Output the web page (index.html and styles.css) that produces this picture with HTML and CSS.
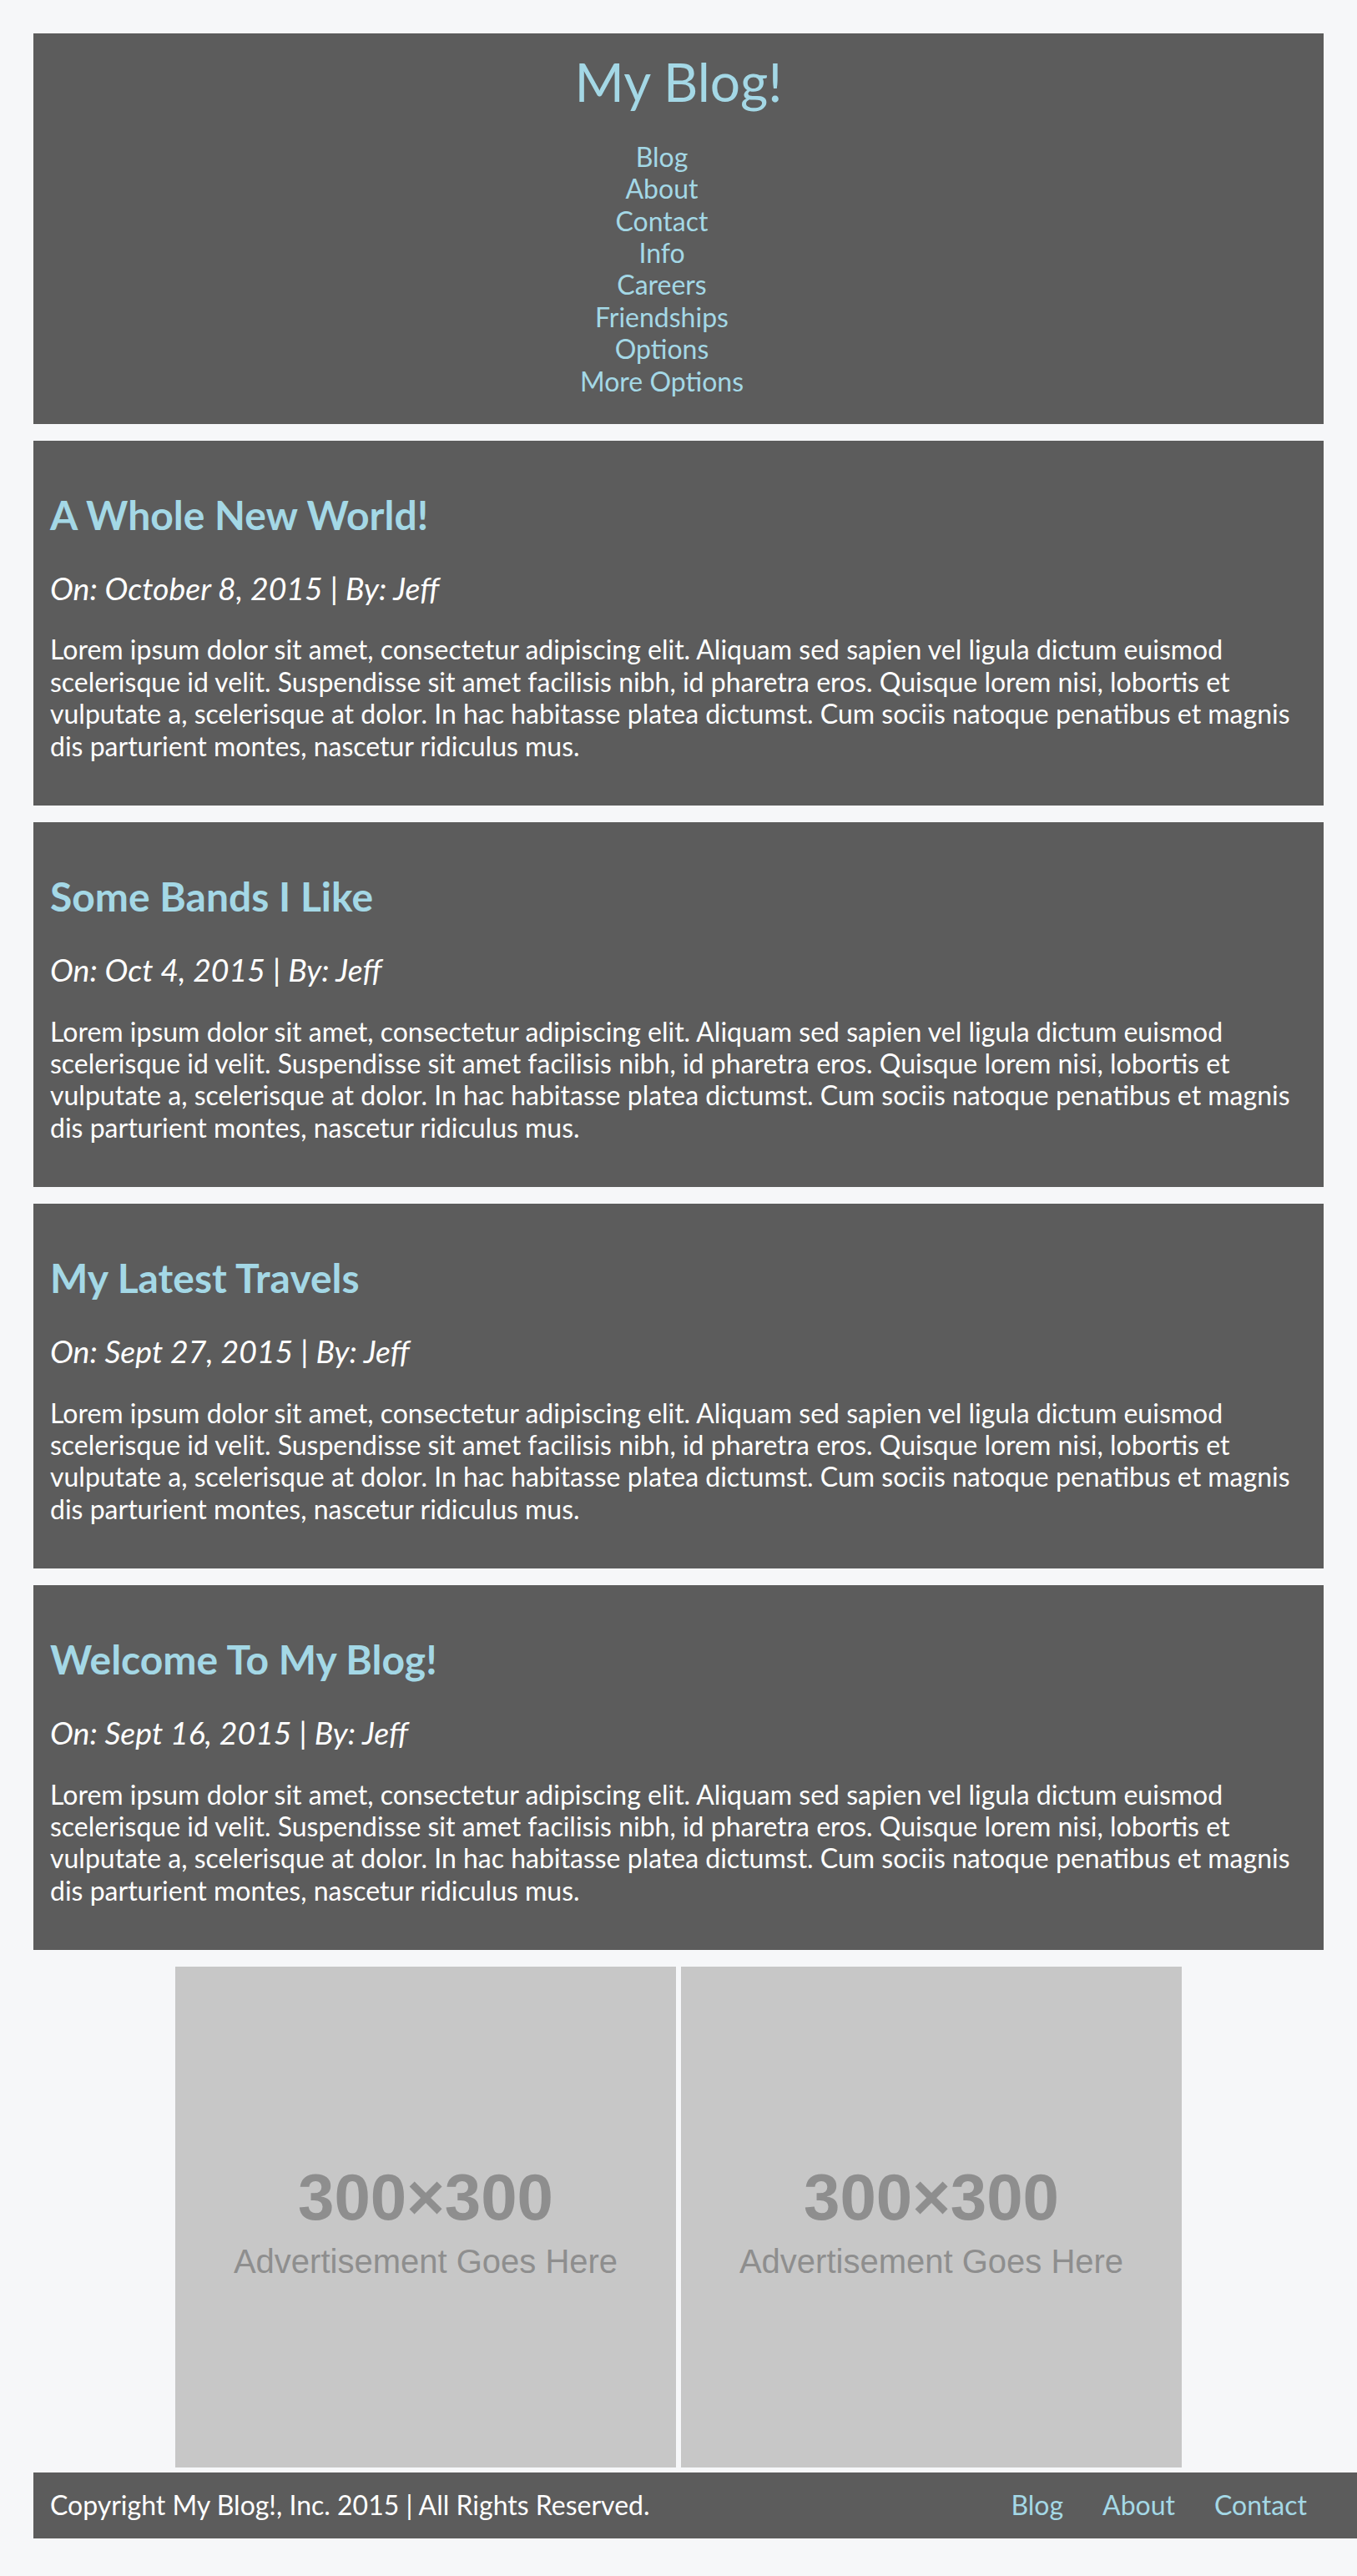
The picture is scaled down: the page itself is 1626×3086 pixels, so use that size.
FILE: index.html
```html
<!DOCTYPE html>
<html lang="en">
<head>
<meta charset="utf-8">
<title>My Blog!</title>
<link rel="stylesheet" href="styles.css">
</head>
<body>
<div class="page">
  <header class="site-header">
    <h1 class="site-title">My Blog!</h1>
    <ul class="site-nav">
      <li><a href="#">Blog</a></li>
      <li><a href="#">About</a></li>
      <li><a href="#">Contact</a></li>
      <li><a href="#">Info</a></li>
      <li><a href="#">Careers</a></li>
      <li><a href="#">Friendships</a></li>
      <li><a href="#">Options</a></li>
      <li><a href="#">More Options</a></li>
    </ul>
  </header>

  <article class="post">
    <h2 class="post-title">A Whole New World!</h2>
    <h3 class="post-meta">On: October 8, 2015 | By: Jeff</h3>
    <p class="post-body">Lorem ipsum dolor sit amet, consectetur adipiscing elit. Aliquam sed sapien vel ligula dictum euismod scelerisque id velit. Suspendisse sit amet facilisis nibh, id pharetra eros. Quisque lorem nisi, lobortis et vulputate a, scelerisque at dolor. In hac habitasse platea dictumst. Cum sociis natoque penatibus et magnis dis parturient montes, nascetur ridiculus mus.</p>
  </article>

  <article class="post">
    <h2 class="post-title">Some Bands I Like</h2>
    <h3 class="post-meta">On: Oct 4, 2015 | By: Jeff</h3>
    <p class="post-body">Lorem ipsum dolor sit amet, consectetur adipiscing elit. Aliquam sed sapien vel ligula dictum euismod scelerisque id velit. Suspendisse sit amet facilisis nibh, id pharetra eros. Quisque lorem nisi, lobortis et vulputate a, scelerisque at dolor. In hac habitasse platea dictumst. Cum sociis natoque penatibus et magnis dis parturient montes, nascetur ridiculus mus.</p>
  </article>

  <article class="post">
    <h2 class="post-title">My Latest Travels</h2>
    <h3 class="post-meta">On: Sept 27, 2015 | By: Jeff</h3>
    <p class="post-body">Lorem ipsum dolor sit amet, consectetur adipiscing elit. Aliquam sed sapien vel ligula dictum euismod scelerisque id velit. Suspendisse sit amet facilisis nibh, id pharetra eros. Quisque lorem nisi, lobortis et vulputate a, scelerisque at dolor. In hac habitasse platea dictumst. Cum sociis natoque penatibus et magnis dis parturient montes, nascetur ridiculus mus.</p>
  </article>

  <article class="post">
    <h2 class="post-title">Welcome To My Blog!</h2>
    <h3 class="post-meta">On: Sept 16, 2015 | By: Jeff</h3>
    <p class="post-body">Lorem ipsum dolor sit amet, consectetur adipiscing elit. Aliquam sed sapien vel ligula dictum euismod scelerisque id velit. Suspendisse sit amet facilisis nibh, id pharetra eros. Quisque lorem nisi, lobortis et vulputate a, scelerisque at dolor. In hac habitasse platea dictumst. Cum sociis natoque penatibus et magnis dis parturient montes, nascetur ridiculus mus.</p>
  </article>

  <div class="ads">
    <div class="ad">
      <span class="ad-size">300×300</span>
      <span class="ad-label">Advertisement Goes Here</span>
    </div>
    <div class="ad">
      <span class="ad-size">300×300</span>
      <span class="ad-label">Advertisement Goes Here</span>
    </div>
  </div>

  <footer class="site-footer">
    <span class="copyright">Copyright My Blog!, Inc. 2015 | All Rights Reserved.</span>
    <ul class="footer-nav">
      <li><a href="#">Blog</a></li>
      <li><a href="#">About</a></li>
      <li><a href="#">Contact</a></li>
    </ul>
  </footer>
</div>
</body>
</html>
```

FILE: styles.css
```css
html, body {
  margin: 0;
  padding: 0;
  background: #f6f7f9;
}

body {
  font-family: Lato, "Open Sans", "Liberation Sans", sans-serif;
  color: #ffffff;
  overflow-x: hidden;
}

.page {
  padding: 40px 40px 46px;
}

a {
  color: #a4d8e6;
  text-decoration: none;
}

.site-header {
  display: flow-root;
  background: #5c5c5c;
  text-align: center;
}

.site-title {
  margin: 20px 0 0;
  font-size: 64px;
  font-weight: normal;
  line-height: 1.2;
  color: #a4d8e6;
}

.site-nav {
  list-style: none;
  margin: 32px 0;
  padding: 0 40px 0 0;
  font-size: 32px;
  line-height: 1.2;
}

.post {
  display: flow-root;
  background: #5c5c5c;
  margin-top: 20px;
  padding: 20px;
}

.post-title {
  margin: 40px 0 0;
  font-size: 48px;
  font-weight: bold;
  line-height: 1.2;
  color: #a4d8e6;
}

.post-meta {
  margin: 37px 0 0;
  font-size: 37.44px;
  font-weight: normal;
  font-style: italic;
  line-height: 1.2;
}

.post-body {
  margin: 32px 0 32px;
  font-size: 32px;
  line-height: 1.2;
}

.ads {
  display: flex;
  justify-content: center;
  gap: 6px;
  margin: 20px 0 6px;
}

.ad {
  width: 600px;
  height: 600px;
  background: #c7c7c7;
  color: #8e8e8e;
  display: flex;
  flex-direction: column;
  align-items: center;
  justify-content: center;
  font-family: "Liberation Sans", Arial, sans-serif;
  padding-top: 10px;
  box-sizing: border-box;
}

.ad-size {
  font-size: 78px;
  font-weight: bold;
  line-height: 1;
}

.ad-label {
  font-size: 40px;
  line-height: 1;
  margin-top: 18px;
}

.site-footer {
  background: #5c5c5c;
  margin-right: -40px;
  padding: 20px;
  display: flex;
  justify-content: space-between;
  align-items: center;
  font-size: 32px;
  line-height: 1.2;
}

.footer-nav {
  list-style: none;
  margin: 0;
  padding: 0 40px 0 0;
  display: flex;
  gap: 47px;
}
```
